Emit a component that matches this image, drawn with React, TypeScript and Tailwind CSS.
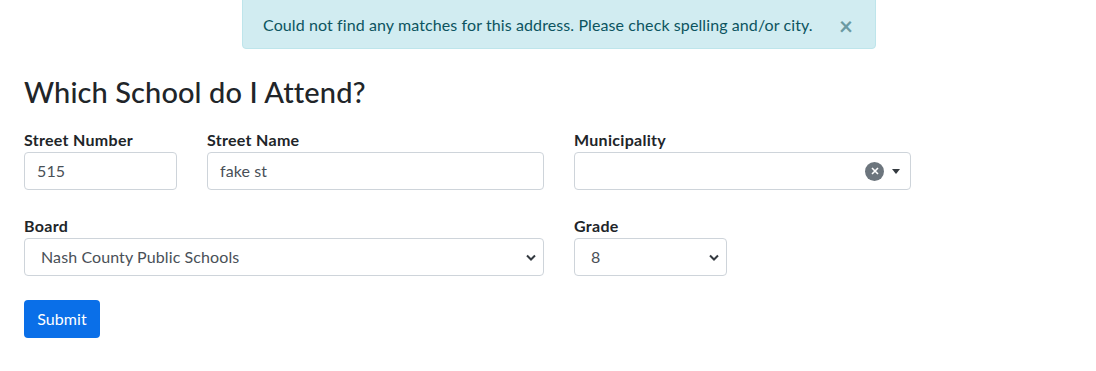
const font = { fontFamily: '"Segoe UI", Lato, "Liberation Sans", sans-serif' }

function Chevron() {
  return (
    <svg width="10" height="7" viewBox="0 0 10 7" className="text-[#343a40]">
      <path d="M1 1.5l4 4 4-4" fill="none" stroke="currentColor" strokeWidth="2" />
    </svg>
  )
}

function Field({ label, width, children }: { label: string; width: string; children: React.ReactNode }) {
  return (
    <div className={`flex flex-col ${width}`}>
      <label className="font-bold text-[16px] leading-6 tracking-[0.3px] text-[#212529]">{label}</label>
      {children}
    </div>
  )
}

export default function App() {
  return (
    <div className="bg-white min-h-[371px] text-[#212529] tracking-[0.1px]" style={font}>
      <div className="flex justify-center pl-[22px]">
        <div className="w-[634px] h-[50px] bg-[#d1ecf1] border border-[#bee5eb] rounded-b-[4px] text-[#0c5460] flex items-center pl-5 pr-[22px] justify-between -mt-px">
          <span className="text-[16px] pt-px">Could not find any matches for this address. Please check spelling and/or city.</span>
          <span className="text-[24px] font-bold leading-none text-[#6b9aa2] mt-1">×</span>
        </div>
      </div>

      <div className="px-6">
        <h3 className="text-[29px] font-medium leading-tight mt-[25px] mb-[18px]">Which School do I Attend?</h3>

        <div className="flex gap-[30px]">
          <Field label="Street Number" width="w-[153px]">
            <div className="h-[38px] border border-[#ced4da] rounded-[4px] px-3 flex items-center text-[#495057]">515</div>
          </Field>
          <Field label="Street Name" width="w-[337px]">
            <div className="h-[38px] border border-[#ced4da] rounded-[4px] px-3 flex items-center text-[#495057]">fake st</div>
          </Field>
          <Field label="Municipality" width="w-[337px]">
            <div className="h-[38px] border border-[#ced4da] rounded-[4px] flex items-center justify-end pr-[10px] gap-[8px]">
              <span className="w-[19px] h-[19px] rounded-full bg-[#6c757d] text-white flex items-center justify-center">
                <svg width="8" height="8" viewBox="0 0 8 8">
                  <path d="M1 1l6 6M7 1l-6 6" stroke="white" strokeWidth="1.6" />
                </svg>
              </span>
              <svg width="8" height="5" viewBox="0 0 8 5">
                <path d="M0 0h8L4 5z" fill="#343a40" />
              </svg>
            </div>
          </Field>
        </div>

        <div className="flex gap-[30px] mt-6">
          <Field label="Board" width="w-[520px]">
            <div className="h-[38px] border border-[#ced4da] rounded-[4px] pl-4 pr-[7px] flex items-center justify-between text-[#495057]">
              <span>Nash County Public Schools</span>
              <Chevron />
            </div>
          </Field>
          <Field label="Grade" width="w-[153px]">
            <div className="h-[38px] border border-[#ced4da] rounded-[4px] pl-4 pr-[7px] flex items-center justify-between text-[#495057]">
              <span>8</span>
              <Chevron />
            </div>
          </Field>
        </div>

        <button className="mt-6 h-[38px] w-[76px] rounded-[4px] bg-[#0a6fe8] text-white text-[16px]">Submit</button>
      </div>
    </div>
  )
}
